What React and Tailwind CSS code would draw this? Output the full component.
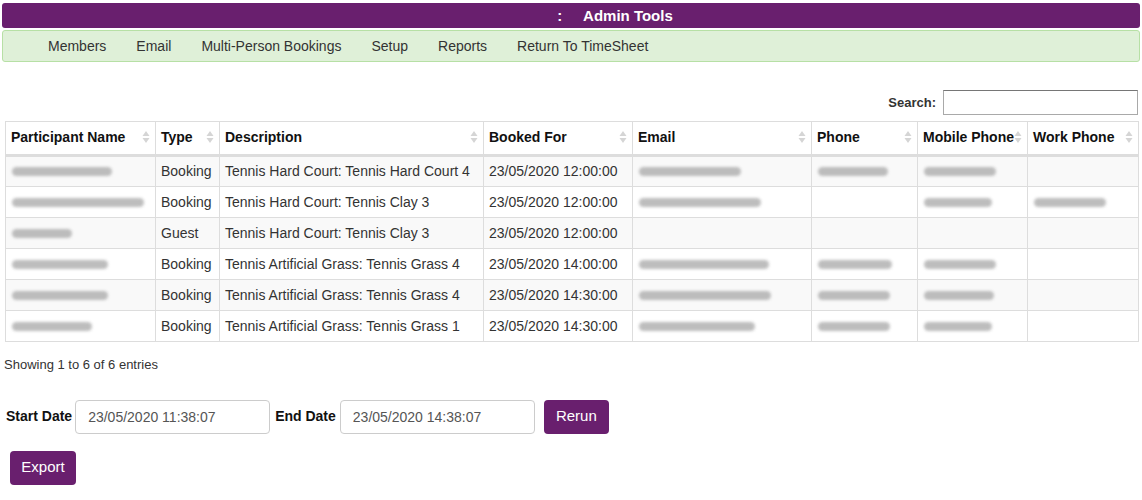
import React from 'react';

const columns = [
  { label: 'Participant Name', w: 'w-[150px]' },
  { label: 'Type', w: 'w-[64px]' },
  { label: 'Description', w: 'w-[264px]' },
  { label: 'Booked For', w: 'w-[149px]' },
  { label: 'Email', w: 'w-[179px]' },
  { label: 'Phone', w: 'w-[106px]' },
  { label: 'Mobile Phone', w: 'w-[110px]' },
  { label: 'Work Phone', w: 'w-[111px]' },
];

// blurred widths (0 = empty cell)
const rows = [
  { name: 100, type: 'Booking', desc: 'Tennis Hard Court: Tennis Hard Court 4', at: '23/05/2020 12:00:00', email: 102, phone: 70, mobile: 72, work: 0 },
  { name: 132, type: 'Booking', desc: 'Tennis Hard Court: Tennis Clay 3', at: '23/05/2020 12:00:00', email: 122, phone: 0, mobile: 68, work: 72 },
  { name: 60, type: 'Guest', desc: 'Tennis Hard Court: Tennis Clay 3', at: '23/05/2020 12:00:00', email: 0, phone: 0, mobile: 0, work: 0 },
  { name: 96, type: 'Booking', desc: 'Tennis Artificial Grass: Tennis Grass 4', at: '23/05/2020 14:00:00', email: 130, phone: 74, mobile: 72, work: 0 },
  { name: 96, type: 'Booking', desc: 'Tennis Artificial Grass: Tennis Grass 4', at: '23/05/2020 14:30:00', email: 132, phone: 72, mobile: 70, work: 0 },
  { name: 80, type: 'Booking', desc: 'Tennis Artificial Grass: Tennis Grass 1', at: '23/05/2020 14:30:00', email: 116, phone: 72, mobile: 68, work: 0 },
];

function SortIcon() {
  return (
    <svg width="8" height="14" viewBox="0 0 8 14" className="shrink-0">
      <path d="M4 1 L7.5 6 L0.5 6 Z" fill="#d5d5d5" />
      <path d="M4 13 L7.5 8 L0.5 8 Z" fill="#d5d5d5" />
    </svg>
  );
}

function Blur({ w }) {
  if (!w) return null;
  return (
    <div className="h-[9px] rounded-full bg-[#a8a8a8] blur-[1.5px] opacity-75" style={{ width: w }} />
  );
}

export default function App() {
  return (
    <div className="w-[1142px] h-[500px] bg-white text-[#333] font-['Liberation_Sans',Arial,sans-serif]">
      {/* top bar */}
      <div className="pt-[3px] px-[2px]">
        <div className="h-[25px] rounded-[3px] bg-[#691f6e] text-white font-bold text-[15px] flex items-center justify-center pt-[1px]">
          <span className="ml-[88px]">:&nbsp;&nbsp;&nbsp;&nbsp;&nbsp;Admin Tools</span>
        </div>
        <div className="mt-[2px] h-[32px] rounded-[3px] bg-[#dff0d8] border border-[#b7e0a5] flex items-center pl-[45px] pt-[1px] text-[14px] text-[#333] gap-[30px]">
          <span>Members</span>
          <span>Email</span>
          <span>Multi-Person Bookings</span>
          <span>Setup</span>
          <span>Reports</span>
          <span>Return To TimeSheet</span>
        </div>
      </div>

      {/* search */}
      <div className="mt-[28px] flex justify-end items-center pr-[4px]">
        <span className="text-[13px] font-bold text-[#333] mr-[7px]">Search:</span>
        <input className="w-[195px] h-[25px] border border-[#a9a9a9] border-t-[#767676] outline-none" />
      </div>

      {/* table */}
      <div className="mt-[6px] ml-[5px] w-[1133px]">
        <table className="border-collapse table-fixed w-full text-[14px]">
          <thead>
            <tr className="h-[34px]">
              {columns.map((c) => (
                <th
                  key={c.label}
                  className={`${c.w} border border-[#ddd] border-b-[3px] border-b-[#ddd] px-[5px] pb-[2px] text-left font-bold text-[14px] text-[#111]`}
                >
                  <div className="flex items-center justify-between">
                    <span className="whitespace-nowrap">{c.label}</span>
                    <SortIcon />
                  </div>
                </th>
              ))}
            </tr>
          </thead>
          <tbody>
            {rows.map((r, i) => (
              <tr
                key={i}
                className={`h-[31px] ${i % 2 === 0 ? 'bg-[#f9f9f9]' : 'bg-white'} ${i === rows.length - 1 ? 'border-b border-b-[#111]' : ''}`}
              >
                <td className="border border-[#ddd] px-[6px]"><Blur w={r.name} /></td>
                <td className="border border-[#ddd] px-[5px] whitespace-nowrap">{r.type}</td>
                <td className="border border-[#ddd] px-[5px] whitespace-nowrap">{r.desc}</td>
                <td className="border border-[#ddd] px-[5px] whitespace-nowrap">{r.at}</td>
                <td className="border border-[#ddd] px-[6px]"><Blur w={r.email} /></td>
                <td className="border border-[#ddd] px-[6px]"><Blur w={r.phone} /></td>
                <td className="border border-[#ddd] px-[6px]"><Blur w={r.mobile} /></td>
                <td className="border border-[#ddd] px-[6px]"><Blur w={r.work} /></td>
              </tr>
            ))}
          </tbody>
        </table>
      </div>

      <div className="mt-[13px] ml-[4px] text-[13px] text-[#333]">Showing 1 to 6 of 6 entries</div>

      {/* dates */}
      <div className="mt-[25px] ml-[6px] flex items-start">
        <span className="text-[14px] font-bold text-[#111] mt-[6px]">Start Date</span>
        <input
          readOnly
          value="23/05/2020 11:38:07"
          className="ml-[3px] w-[195px] h-[34px] border border-[#ccc] rounded-[4px] px-[12px] text-[14px] text-[#555] outline-none"
        />
        <span className="ml-[5px] text-[14px] font-bold text-[#111] mt-[6px]">End Date</span>
        <input
          readOnly
          value="23/05/2020 14:38:07"
          className="ml-[4px] w-[195px] h-[34px] border border-[#ccc] rounded-[4px] px-[12px] text-[14px] text-[#555] outline-none"
        />
        <button className="ml-[9px] w-[65px] h-[34px] rounded-[4px] bg-[#691f6e] text-white text-[15px]">Rerun</button>
      </div>
      <div className="mt-[17px] ml-[10px]">
        <button className="w-[66px] h-[34px] rounded-[4px] bg-[#691f6e] text-white text-[15px]">Export</button>
      </div>
    </div>
  );
}
